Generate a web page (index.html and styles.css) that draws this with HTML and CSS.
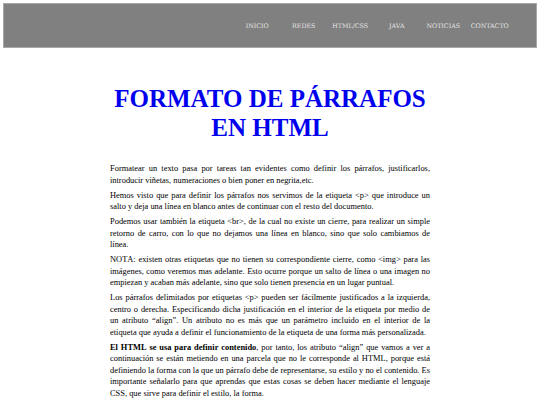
FILE: index.html
```html
<!DOCTYPE html>
<html lang="es">
<head>
<meta charset="utf-8">
<title>Formato de párrafos en HTML</title>
<link rel="stylesheet" href="styles.css">
</head>
<body>
<header class="topbar">
  <nav class="nav">
    <a class="nav-item" href="#">INICIO</a>
    <a class="nav-item" href="#">REDES</a>
    <a class="nav-item" href="#">HTML/CSS</a>
    <a class="nav-item" href="#">JAVA</a>
    <a class="nav-item" href="#">NOTICIAS</a>
    <a class="nav-item" href="#">CONTACTO</a>
  </nav>
</header>
<main class="content">
  <h1 class="title">FORMATO DE PÁRRAFOS EN HTML</h1>
  <p>Formatear un texto pasa por tareas tan evidentes como definir los párrafos, justificarlos, introducir viñetas, numeraciones o bien poner en negrita,etc.</p>
  <p>Hemos visto que para definir los párrafos nos servimos de la etiqueta &lt;p&gt; que introduce un salto y deja una línea en blanco antes de continuar con el resto del documento.</p>
  <p>Podemos usar también la etiqueta &lt;br&gt;, de la cual no existe un cierre, para realizar un simple retorno de carro, con lo que no dejamos una línea en blanco, sino que solo cambiamos de línea.</p>
  <p>NOTA: existen otras etiquetas que no tienen su correspondiente cierre, como &lt;img&gt; para las imágenes, como veremos mas adelante. Esto ocurre porque un salto de línea o una imagen no empiezan y acaban más adelante, sino que solo tienen presencia en un lugar puntual.</p>
  <p>Los párrafos delimitados por etiquetas &lt;p&gt; pueden ser fácilmente justificados a la izquierda, centro o derecha. Especificando dicha justificación en el interior de la etiqueta por medio de un atributo “align”. Un atributo no es más que un parámetro incluido en el interior de la etiqueta que ayuda a definir el funcionamiento de la etiqueta de una forma más personalizada.</p>
  <p><b>El HTML se usa para definir contenido</b>, por tanto, los atributo “align” que vamos a ver a continuación se están metiendo en una parcela que no le corresponde al HTML, porque está definiendo la forma con la que un párrafo debe de representarse, su estilo y no el contenido. Es importante señalarlo para que aprendas que estas cosas se deben hacer mediante el lenguaje CSS, que sirve para definir el estilo, la forma.</p>
  <p>Como vais, en cada caso el atributo “align” tomara determinados valores que son escritos entre comillas.</p>
</main>
</body>
</html>
```
FILE: styles.css
```css
html, body {
  margin: 0;
  padding: 0;
  background: #ffffff;
}
body {
  font-family: "Liberation Serif", "Times New Roman", serif;
  color: #000000;
}
.topbar {
  margin: 3px 3px 0 3px;
  height: 43px;
  background: #808080;
  border: 1px solid #a8a8a8;
  display: flex;
  align-items: center;
  justify-content: flex-end;
}
.nav {
  display: flex;
  margin-right: 23px;
}
.nav-item {
  width: 46.5px;
  text-align: center;
  font-family: "DejaVu Serif", serif;
  font-size: 6.3px;
  color: #e4e4e4;
  text-decoration: none;
}
.content {
  width: 320px;
  margin: 36px auto 0 auto;
}
.title {
  margin: 0 0 21px 0;
  font-size: 25px;
  font-weight: bold;
  line-height: 29px;
  color: #0000ee;
  text-align: center;
}
.content p {
  margin: 0 0 3.5px 0;
  font-size: 8.42px;
  font-kerning: none;
  line-height: 11.5px;
  text-align: justify;
}
```
